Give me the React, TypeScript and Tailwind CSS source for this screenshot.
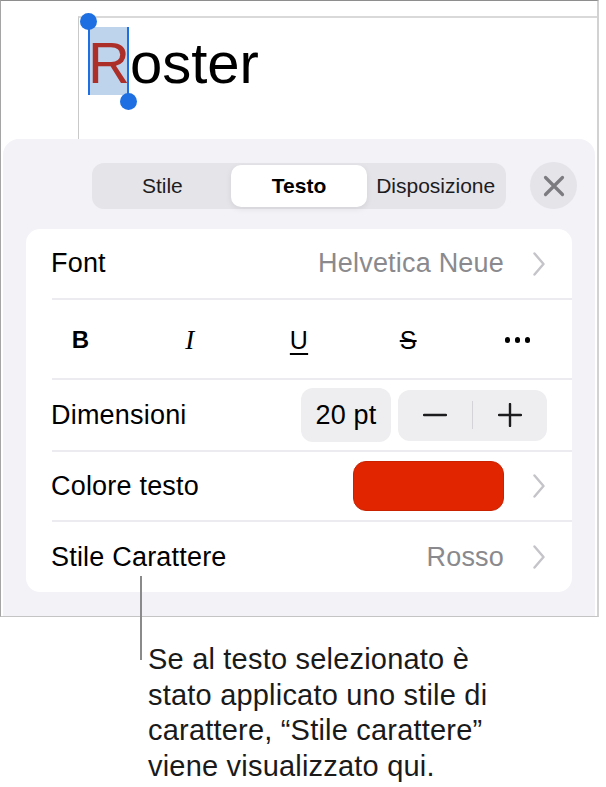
import React from "react";

const Chevron = () => (
  <svg width="14" height="24" viewBox="0 0 14 24" className="shrink-0">
    <path
      d="M2.5 1.5 L11.5 12 L2.5 22.5"
      fill="none"
      stroke="#c4c4c9"
      strokeWidth="2.4"
      strokeLinecap="round"
      strokeLinejoin="round"
    />
  </svg>
);

const Sep = () => <div className="ml-[26px] h-[2px] bg-[#ececf0]" />;

export default function App() {
  return (
    <div className="relative w-[606px] h-[787px] bg-white font-['Liberation_Sans',Arial,sans-serif] text-black overflow-hidden">
      {/* device frame */}
      <div className="w-[599px] h-[617px] flex flex-col border-t border-l border-b border-r-2 border-t-[#8e8e8e] border-l-[#a5a5a5] border-b-[#c4c4c4] border-r-[#d2d2d2]">
        {/* document area */}
        <div className="h-[138px] shrink-0 pt-[15px] pl-[77px]">
          <div className="h-full border-t-2 border-l border-t-[#d9d9d9] border-l-[#c9c9c9] pl-[9px] pt-[16px]">
            <div className="text-[58px] leading-[58px] whitespace-nowrap">
              <span className="relative inline-block text-[#ad2f29]">
                <span className="absolute left-0 top-[-7px] w-[39px] h-[68px] bg-[#bed4ec]" />
                <span className="absolute left-[-0.5px] top-[-13px] w-[2.5px] h-[74px] bg-[#1d6fe2]" />
                <span className="absolute left-[-8px] top-[-21.5px] w-[17px] h-[17px] rounded-full bg-[#1d6fe2]" />
                <span className="absolute left-[38.5px] top-[-7px] w-[2.5px] h-[74px] bg-[#1d6fe2]" />
                <span className="absolute left-[31.5px] top-[58.5px] w-[17px] h-[17px] rounded-full bg-[#1d6fe2]" />
                <span className="relative">R</span>
              </span>
              oster
            </div>
          </div>
        </div>

        {/* format panel */}
        <div className="flex-1 mx-[2px] rounded-t-[16px] bg-[#f2f2f7] flex flex-col">
          {/* header */}
          <div className="flex items-center pt-[23px] pl-[89px] gap-[24px]">
            <div className="w-[414px] h-[46px] rounded-[12px] bg-[#e4e4e9] p-[2px] grid grid-cols-3 text-[21px]">
              <div className="flex items-center justify-center font-medium text-[#1c1c1e]">Stile</div>
              <div className="flex items-center justify-center rounded-[10px] bg-white shadow-[0_2px_6px_rgba(0,0,0,0.08)] font-semibold">
                Testo
              </div>
              <div className="flex items-center justify-center font-medium text-[#1c1c1e] whitespace-nowrap">
                Disposizione
              </div>
            </div>
            <div className="w-[47px] h-[47px] rounded-full bg-[#e4e4e9] flex items-center justify-center">
              <svg width="22" height="22" viewBox="0 0 22 22">
                <path
                  d="M2.5 2.5 L19.5 19.5 M19.5 2.5 L2.5 19.5"
                  stroke="#7b7b80"
                  strokeWidth="3.2"
                  strokeLinecap="round"
                />
              </svg>
            </div>
          </div>

          {/* card */}
          <div className="mt-[20px] ml-[23px] w-[546px] rounded-[14px] bg-white flex flex-col text-[27px] tracking-[0.2px]">
            {/* Font */}
            <div className="h-[69px] flex items-center justify-between pl-[25px] pr-[26px]">
              <span>Font</span>
              <div className="flex items-center gap-[28px]">
                <span className="text-[#8a8a8e]">Helvetica Neue</span>
                <Chevron />
              </div>
            </div>
            <Sep />
            {/* BIUS */}
            <div className="h-[78px] pt-[2px] grid grid-cols-5 items-center justify-items-center">
              <span className="font-bold text-[24px] leading-none">B</span>
              <span className="font-['Liberation_Serif',serif] italic text-[27px] leading-none">I</span>
              <span className="text-[25px] leading-none underline decoration-[2px] underline-offset-[4px]">U</span>
              <span className="text-[25px] leading-none line-through decoration-[2px]">S</span>
              <span className="flex items-center gap-[4.5px]">
                <span className="w-[5.5px] h-[5.5px] rounded-full bg-black" />
                <span className="w-[5.5px] h-[5.5px] rounded-full bg-black" />
                <span className="w-[5.5px] h-[5.5px] rounded-full bg-black" />
              </span>
            </div>
            <Sep />
            {/* Dimensioni */}
            <div className="h-[70px] flex items-center justify-between pl-[25px] pr-[25px]">
              <span>Dimensioni</span>
              <div className="flex items-center gap-[7px]">
                <div className="w-[90px] h-[54px] rounded-[12px] bg-[#eeeef0] flex items-center justify-center">
                  20 pt
                </div>
                <div className="w-[149px] h-[51px] rounded-[12px] bg-[#eeeef0] flex items-center">
                  <div className="flex-1 flex items-center justify-center">
                    <svg width="24" height="4" viewBox="0 0 24 4">
                      <path d="M1 2 L23 2" stroke="#1c1c1e" strokeWidth="2.4" strokeLinecap="round" />
                    </svg>
                  </div>
                  <div className="w-[1.5px] h-[28px] bg-[#d4d4d8]" />
                  <div className="flex-1 flex items-center justify-center">
                    <svg width="24" height="24" viewBox="0 0 24 24">
                      <path d="M1 12 L23 12 M12 1 L12 23" stroke="#1c1c1e" strokeWidth="2.4" strokeLinecap="round" />
                    </svg>
                  </div>
                </div>
              </div>
            </div>
            <Sep />
            {/* Colore testo */}
            <div className="h-[68px] flex items-center justify-between pl-[25px] pr-[26px]">
              <span>Colore testo</span>
              <div className="flex items-center gap-[28px]">
                <div className="w-[151px] h-[50px] rounded-[13px] bg-[#e02500] border border-[#c92200]" />
                <Chevron />
              </div>
            </div>
            <Sep />
            {/* Stile Carattere */}
            <div className="h-[70px] flex items-center justify-between pl-[25px] pr-[26px]">
              <span>Stile Carattere</span>
              <div className="flex items-center gap-[28px]">
                <span className="text-[#8a8a8e]">Rosso</span>
                <Chevron />
              </div>
            </div>
          </div>
        </div>
      </div>

      {/* callout line */}
      <div className="absolute left-[140px] top-[576px] w-[2px] h-[84px] bg-[#8a8a8a]" />

      {/* callout text */}
      <div className="pl-[148px] pt-[25px] text-[29px] leading-[35.5px] tracking-[0.2px] text-[#1a1a1a] whitespace-nowrap">
        Se al testo selezionato è
        <br />
        stato applicato uno stile di
        <br />
        carattere, “Stile carattere”
        <br />
        viene visualizzato qui.
      </div>
    </div>
  );
}
